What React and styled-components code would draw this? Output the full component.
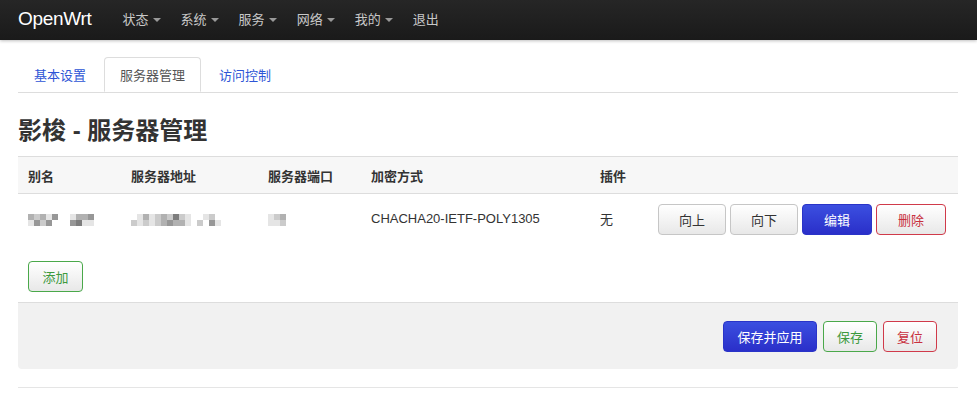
import React from "react";
import styled, { createGlobalStyle } from "styled-components";

const Global = createGlobalStyle`
  html, body { margin: 0; padding: 0; background: #fff; }
  body { font-family: "Liberation Sans", "Noto Sans CJK SC", sans-serif; font-size: 13px; color: #333; }
`;

const Header = styled.div`
  height: 40px;
  background: linear-gradient(#262626, #1a1a1a);
  box-shadow: 0 1px 3px rgba(0,0,0,0.25);
  display: flex;
  align-items: center;
  padding: 0 18px;
`;
const Brand = styled.div`
  color: #fff;
  font-size: 19px;
  font-family: "Liberation Sans", sans-serif;
  letter-spacing: -0.3px;
  margin-right: 31px;
  margin-top: -3px;
`;
const Nav = styled.div`
  display: flex;
  align-items: center;
  gap: 20px;
`;
const NavItem = styled.div`
  color: #c8c8c8;
  font-size: 13px;
  display: flex;
  align-items: center;
  gap: 4px;
  margin-top: -3px;
`;
const Caret = styled.span`
  width: 0; height: 0;
  border-left: 4px solid transparent;
  border-right: 4px solid transparent;
  border-top: 4px solid #999;
  margin-top: 2px;
`;

const Main = styled.div`
  padding: 0 19px 0 18px;
`;
const Tabs = styled.div`
  display: flex;
  gap: 2px;
  margin-top: 17px;
  border-bottom: 1px solid #ddd;
  height: 35px;
`;
const Tab = styled.div`
  padding: 0 15px;
  display: flex;
  align-items: center;
  font-size: 13px;
  color: ${p => (p.$active ? "#555" : "#2d55d6")};
  border: 1px solid ${p => (p.$active ? "#ddd" : "transparent")};
  border-bottom-color: ${p => (p.$active ? "#fff" : "transparent")};
  border-radius: 4px 4px 0 0;
  background: #fff;
  margin-bottom: -1px;
  height: 35px;
  box-sizing: border-box;
`;
const Title = styled.h2`
  margin: 23px 0 10px;
  font-size: 24px;
  font-weight: bold;
  color: #333;
  line-height: 30px;
`;
const Table = styled.table`
  width: 100%;
  border-collapse: collapse;
  table-layout: fixed;
`;
const Th = styled.th`
  background: #f7f7f7;
  border-top: 1px solid #ddd;
  border-bottom: 1px solid #ddd;
  text-align: left;
  font-weight: bold;
  font-size: 13px;
  padding: 0 10px;
  height: 36px;
  color: #333;
`;
const Td = styled.td`
  padding: 0 10px;
  height: 56px;
  font-size: 13px;
  color: #333;
  vertical-align: middle;
`;
const Lifted = styled.span`
  position: relative;
  top: -4px;
`;
const BtnRow = styled.div`
  display: flex;
  gap: 4px;
  margin-top: -5px;
`;
const Button = styled.button`
  font-family: inherit;
  font-size: 13px;
  height: 31px;
  width: ${p => p.$w}px;
  padding: 0;
  border-radius: 4px;
  cursor: pointer;
  border: 1px solid ${p => (p.$kind === "primary" ? "#2a34c8" : p.$kind === "danger" ? "#d03a4a" : p.$kind === "success" ? "#4aa84a" : "#c6c6c6")};
  color: ${p => (p.$kind === "primary" ? "#fff" : p.$kind === "danger" ? "#c8303e" : p.$kind === "success" ? "#3d9a3d" : "#333")};
  background: ${p => (p.$kind === "primary" ? "linear-gradient(#3b4fe0, #2a2fc9)" : "linear-gradient(#ffffff, #e8e8e8)")};
`;
const Mosaic = styled.div`
  display: grid;
  grid-template-columns: repeat(${p => p.$cols}, 6px);
  grid-auto-rows: 6px;
  margin-top: -5px;
`;
const Cell = styled.span`
  display: block;
`;
const AddRow = styled.div`
  padding: 11px 10px 10px;
`;
const Footer = styled.div`
  background: #f1f1f1;
  border-top: 1px solid #ddd;
  border-radius: 0 0 4px 4px;
  height: 66px;
  display: flex;
  justify-content: flex-end;
  align-items: center;
  gap: 6px;
  padding-right: 21px;
`;
const BottomLine = styled.div`
  border-top: 1px solid #e5e5e5;
  margin-top: 18px;
`;

function MosaicText({ pattern }) {
  const rows = pattern.length;
  const cols = pattern[0].length;
  const cells = [];
  for (let r = 0; r < rows; r++)
    for (let c = 0; c < cols; c++) {
      const v = pattern[r][c];
      const g = v === 0 ? 255 : 255 - v * 26;
      cells.push(<Cell key={r + "-" + c} style={{ background: `rgb(${g},${g},${g})` }} />);
    }
  return <Mosaic $cols={cols}>{cells}</Mosaic>;
}

const aliasP = [
  [3, 2, 3, 1, 4, 0, 0, 1, 3, 3, 4],
  [1, 4, 2, 4, 0, 0, 0, 4, 5, 1, 1],
];
const addrP = [
  [0, 1, 3, 1, 2, 3, 2, 5, 2, 1, 0, 0, 1, 2, 0, 0],
  [2, 1, 2, 1, 2, 3, 4, 3, 3, 1, 0, 2, 0, 4, 1, 0],
];
const portP = [
  [1, 2, 3, 0],
  [1, 1, 2, 0],
];

export default function App() {
  return (
    <>
      <Global />
      <Header>
        <Brand>OpenWrt</Brand>
        <Nav>
          <NavItem>状态 <Caret /></NavItem>
          <NavItem>系统 <Caret /></NavItem>
          <NavItem>服务 <Caret /></NavItem>
          <NavItem>网络 <Caret /></NavItem>
          <NavItem>我的 <Caret /></NavItem>
          <NavItem>退出</NavItem>
        </Nav>
      </Header>
      <Main>
        <Tabs>
          <Tab>基本设置</Tab>
          <Tab $active>服务器管理</Tab>
          <Tab>访问控制</Tab>
        </Tabs>
        <Title>影梭 - 服务器管理</Title>
        <Table>
          <colgroup>
            <col style={{ width: 103 }} />
            <col style={{ width: 137 }} />
            <col style={{ width: 103 }} />
            <col style={{ width: 229 }} />
            <col style={{ width: 58 }} />
            <col />
          </colgroup>
          <thead>
            <tr>
              <Th>别名</Th>
              <Th>服务器地址</Th>
              <Th>服务器端口</Th>
              <Th>加密方式</Th>
              <Th>插件</Th>
              <Th></Th>
            </tr>
          </thead>
          <tbody>
            <tr>
              <Td><MosaicText pattern={aliasP} /></Td>
              <Td><MosaicText pattern={addrP} /></Td>
              <Td><MosaicText pattern={portP} /></Td>
              <Td><Lifted>CHACHA20-IETF-POLY1305</Lifted></Td>
              <Td><Lifted>无</Lifted></Td>
              <Td>
                <BtnRow>
                  <Button $w={68}>向上</Button>
                  <Button $w={68}>向下</Button>
                  <Button $w={70} $kind="primary">编辑</Button>
                  <Button $w={70} $kind="danger">删除</Button>
                </BtnRow>
              </Td>
            </tr>
          </tbody>
        </Table>
        <AddRow>
          <Button $w={55} $kind="success">添加</Button>
        </AddRow>
        <Footer>
          <Button $w={94} $kind="primary">保存并应用</Button>
          <Button $w={54} $kind="success">保存</Button>
          <Button $w={54} $kind="danger">复位</Button>
        </Footer>
        <BottomLine />
      </Main>
    </>
  );
}
